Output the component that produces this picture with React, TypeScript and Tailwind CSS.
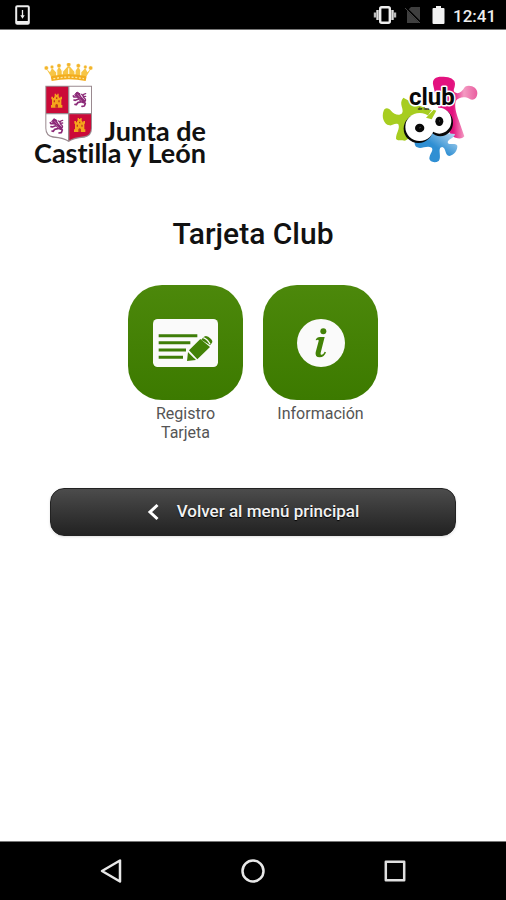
import type { ReactNode } from "react";

function StatusBar() {
  return (
    <div className="flex h-[30px] shrink-0 items-center border-b border-[#777] bg-black pr-2 pl-[15px] text-[#eee]">
      <svg width="15" height="20" viewBox="0 0 15 20" fill="none" aria-hidden="true">
        <rect x="1.2" y="1.2" width="12.6" height="17.6" rx="1" stroke="#eee" strokeWidth="2" />
        <path d="M2 17.5h11" stroke="#eee" strokeWidth="3" />
        <path d="M7.5 5v7M6.500 11l1 1.500 1-1.500z" stroke="#eee" strokeWidth="1.3" fill="#eee" />
      </svg>
      <div className="ml-auto flex items-center">
        <svg width="24" height="20" viewBox="0 0 24 20" fill="none" aria-hidden="true">
          <rect x="7.2" y="2.2" width="9.6" height="15.6" rx="1.5" stroke="#eee" strokeWidth="2.4" />
          <path d="M4.5 5v10M19.5 5v10" stroke="#ddd" strokeWidth="2.4" />
          <path d="M2 7.500v5M22 7.500v5" stroke="#bbb" strokeWidth="2.4" />
        </svg>
        <svg className="ml-2" width="17" height="18" viewBox="0 0 17 18" aria-hidden="true">
          <path d="M6 1h9v16H2V5z" fill="#3f3f3f" />
          <path d="M0 1l16 16" stroke="#000" strokeWidth="2" />
          <path d="M0 2l15 15" stroke="#444" strokeWidth="1" />
        </svg>
        <svg className="ml-[10px]" width="13" height="20" viewBox="0 0 13 20" aria-hidden="true">
          <path d="M4 1h5v2h2.500q1 0 1 1v14q0 1-1 1h-10q-1 0-1-1V4q0-1 1-1H4z" fill="#f2f2f2" />
        </svg>
        <span className="ml-2 w-[45px] pt-[2px] text-[17px] leading-5 font-medium">12:41</span>
      </div>
    </div>
  );
}

function Castle({ x, y }: { x: number; y: number }) {
  return (
    <g transform={`translate(${x} ${y})`}>
      <path
        d="M0 42V34h3V17H1V9h5v4h3v-4h2V0h4v3h4V0h4v9h2v4h3V9h5v8h-2v17h3v8z"
        fill="#f5a41c"
      />
      <path d="M13 42v-8q4-6 8 0v8zM8 20h4v6H8zM22 20h4v6h-4zM15 11h4v5h-4z" fill="#c23a1c" />
    </g>
  );
}

function Lion({ x, y }: { x: number; y: number }) {
  return (
    <g transform={`translate(${x} ${y})`} fill="none" stroke="#8c2a78" strokeLinecap="round" strokeLinejoin="round">
      <path d="M14 7Q20 20 31 28" strokeWidth="12" />
      <path d="M9 3l4-3 3 4 5 1-2 6-8 1-5-2z" fill="#8c2a78" strokeWidth="3" />
      <path d="M14 15L3 15l-2-3M17 21L7 25l-4-1M26 29L14 32l-4 6-4-1M31 29l6 5-3 8-7 1" strokeWidth="5" />
      <path d="M34 29q6-4 2-9-7-4-6-9 1-5 8-6M30 11l-4-4M31 14l7-1" strokeWidth="4" />
      <path d="M14 8l7 8M18 20l8 7" stroke="#c987b4" strokeWidth="2" />
    </g>
  );
}

function Crest() {
  return (
    <svg width="49" height="79" viewBox="18 9 147 237" aria-hidden="true">
      <path
        d="M38 48L24 25l12 12 6-13 12 13 9-17 11 16 18-20 18 20 11-16 9 17 12-13 6 13 12-12-14 23z"
        fill="#f7c545"
      />
      <path d="M38 49q54-12 108 0l-3 14q-51-10-102 0z" fill="#f3ad1e" />
      <path d="M46 56q46-9 92 0" stroke="#fde6a0" strokeWidth="4" strokeDasharray="6 5" fill="none" />
      <g fill="#f3b52c" stroke="#fff2c4" strokeWidth="1">
        <circle cx="25" cy="24" r="6" />
        <circle cx="42" cy="21" r="5" />
        <circle cx="63" cy="17" r="6" />
        <circle cx="92" cy="14" r="6" />
        <circle cx="121" cy="17" r="6" />
        <circle cx="142" cy="21" r="5" />
        <circle cx="158" cy="24" r="6" />
      </g>
      <path d="M56 46V31m17 12V29m19 13V25m19 18V29m17 17V31" stroke="#fff6d8" strokeWidth="4" />
      <path d="M22 77h140v128q0 24-23 28-34 2-47 13-13-11-47-13-23-4-23-28z" fill="#9a8a90" />
      <path d="M25 80h65v79H25zM94 163h65v42q0 21-21 24-32 3-44 12z" fill="#cb0a38" />
      <path d="M94 80h65v79H94zM25 163h65v78q-12-9-44-12-21-3-21-24z" fill="#fff" />
      <Castle x={39} y={101} />
      <Castle x={108} y={174} />
      <Lion x={105} y={96} />
      <Lion x={36} y={176} />
    </svg>
  );
}

function JuntaLogo() {
  return (
    <div
      role="img"
      aria-label="Junta de Castilla y León"
      className="w-[176px] font-['Lato',sans-serif] text-[27px] leading-[22px] font-bold text-[#111] [font-variant-ligatures:none]"
    >
      <div className="flex items-end justify-between pl-[14px]">
        <Crest />
        <span className="whitespace-nowrap">Junta de</span>
      </div>
      <div className="text-right whitespace-nowrap">Castilla y León</div>
    </div>
  );
}

function ClubLogo() {
  return (
    <svg width="98" height="90" viewBox="33 27 294 270" role="img" aria-label="Club de los 60">
      <defs>
        <linearGradient id="pink" x1="0" y1="0" x2="1" y2="0">
          <stop offset="0.450" stopColor="#e3127f" />
          <stop offset="0.700" stopColor="#f39bc2" />
          <stop offset="1" stopColor="#ea5c9f" />
        </linearGradient>
        <linearGradient id="blue" x1="0" y1="1" x2="1" y2="0">
          <stop offset="0.500" stopColor="#2f8fd3" />
          <stop offset="1" stopColor="#c9e2f4" />
        </linearGradient>
      </defs>
      <path
        d="M190 62C184 40 200 34 218 35q33-1 37 20c1 14-7 19-2 26 10 8 22 2 32-16 15-8 38 2 37 20-1 18-14 23-24 16-14-8-32-5-40 6-6 15 0 35 8 58l17 49c-10 12-25 5-38 0l-36-68z"
        fill="url(#pink)"
      />
      <path
        d="M100 98l36 20 45 16 12 8-44 58-44 27c-12-2-23 1-27-6 0-17 13-30 7-43-12-5-16 5-27 3-17-4-24-26-17-44 5-12 17-7 22 0 10 13 26 16 33 8 8-14-12-28 4-47z"
        fill="#a7cd20"
      />
      <path
        d="M134 225l52-25 69 7c-2 13-18 13-22 24 1 13 21 0 29 11 1 15-11 28-24 31-14-1-9-24-21-27-17 1 0 30-11 42-12 8-28 2-28-8 1-15 14-24 7-32-14-8-30 5-43-1-7-3-9-8-8-22z"
        fill="url(#blue)"
      />
      <ellipse cx="211" cy="173" rx="38" ry="41" fill="#080808" />
      <ellipse cx="145" cy="191" rx="44" ry="43" fill="#080808" />
      <ellipse cx="208" cy="167" rx="36" ry="39" fill="#fff" />
      <ellipse cx="149" cy="186" rx="43" ry="42" fill="#fff" />
      <path d="M168 158l23-24 8 3-14 26z" fill="#a7cd20" />
      <ellipse cx="149" cy="189" rx="14" ry="13" fill="#080808" />
      <ellipse cx="208" cy="169" rx="12" ry="14" fill="#080808" />
      <path d="M148 189l4-2M207 169l3-2" stroke="#777" strokeWidth="2" />
      <text
        x="117"
        y="121"
        fontSize="72"
        fontWeight="700"
        fill="#080808"
        stroke="#fff"
        strokeWidth="9"
        strokeLinejoin="round"
        paintOrder="stroke"
        className="font-['Roboto',sans-serif]"
      >
        club
      </text>
      <text x="143" y="136" fontSize="13" fontWeight="700" fill="#222" className="font-['Roboto',sans-serif]">
        de los
      </text>
    </svg>
  );
}

function CardIcon() {
  return (
    <svg width="65" height="48" viewBox="0 0 195 144" aria-hidden="true">
      <rect width="195" height="144" rx="14" fill="#fafafa" />
      <path d="M17 50h116M17 71h95M17 93h82M17 115h73" stroke="#3e7d08" strokeWidth="9" />
      <path d="M150 56q9-11 24 4 7 7 2 13l-5 6-26-17zM142 60l29 24-38 37-25-27zM105 99l24 24-27 3z" fill="#438207" />
      <path d="M151 56q14 6 20 20" stroke="#fafafa" strokeWidth="4" fill="none" />
      <path d="M109 101l16 16" stroke="#fafafa" strokeWidth="3" />
    </svg>
  );
}

function InfoIcon() {
  return (
    <svg width="48" height="48" viewBox="0 0 144 144" aria-hidden="true">
      <circle cx="72" cy="72" r="72" fill="#fafafa" />
      <circle cx="79" cy="37" r="9" fill="#438207" />
      <path
        d="M56 63q3-9 13-9h14L71 101q-2 8 4 6 5-2 8-9l4 2q-5 15-19 15-15 0-12-15l9-34q1-6-8-2z"
        fill="#438207"
      />
    </svg>
  );
}

function Tile({ label, children }: { label: string; children: ReactNode }) {
  return (
    <button className="flex w-[115px] flex-col items-center gap-1">
      <span className="flex h-[115px] w-full items-center justify-center rounded-[34px] bg-linear-to-b from-[#4c880b] to-[#3c7a00]">
        {children}
      </span>
      <span className="w-[90px] text-base leading-[19px] text-[#555]">{label}</span>
    </button>
  );
}

function NavBar() {
  return (
    <nav className="grid h-[59px] shrink-0 grid-cols-3 place-items-center border-t border-[#777] bg-black px-10">
      <button aria-label="Atrás">
        <svg width="24" height="26" viewBox="0 0 24 26" fill="none" stroke="#e8e8e8" strokeWidth="2.500" strokeLinejoin="round">
          <path d="M21 2.500v21L3 13z" />
        </svg>
      </button>
      <button aria-label="Inicio">
        <svg width="26" height="26" viewBox="0 0 26 26" fill="none" stroke="#e8e8e8" strokeWidth="2.500">
          <circle cx="13" cy="13" r="10.500" />
        </svg>
      </button>
      <button aria-label="Recientes">
        <svg width="22" height="22" viewBox="0 0 22 22" fill="none" stroke="#e0e0e0" strokeWidth="2.500" strokeLinejoin="round">
          <rect x="1.800" y="1.800" width="18.400" height="18.400" />
        </svg>
      </button>
    </nav>
  );
}

export default function App() {
  return (
    <div className="flex min-h-screen flex-col bg-white font-['Roboto',sans-serif]">
      <StatusBar />
      <header className="flex items-start justify-between pt-[33px] pr-[27px] pl-[30px]">
        <JuntaLogo />
        <div className="pt-[11px]">
          <ClubLogo />
        </div>
      </header>
      <main className="flex-1 pt-[52px]">
        <h1 className="text-center text-[30px] leading-9 font-medium text-[#111]">Tarjeta Club</h1>
        <div className="mt-[33px] flex justify-center gap-5">
          <Tile label="Registro Tarjeta">
            <CardIcon />
          </Tile>
          <Tile label="Información">
            <InfoIcon />
          </Tile>
        </div>
        <div className="mt-[46px] px-[50px]">
          <button className="flex h-12 w-full items-center justify-center gap-[18px] rounded-[14px] border border-[#222] bg-linear-to-b from-[#4c4c4c] to-[#222] text-[17px] font-medium text-[#f2f2f2] shadow-sm text-shadow-[0_1px_1px_#000]">
            <svg width="12" height="18" viewBox="0 0 12 18" fill="none" stroke="#fff" strokeWidth="3" aria-hidden="true">
              <path d="M10.500 2L3 9l7.500 7" />
            </svg>
            Volver al menú principal
          </button>
        </div>
      </main>
      <NavBar />
    </div>
  );
}
